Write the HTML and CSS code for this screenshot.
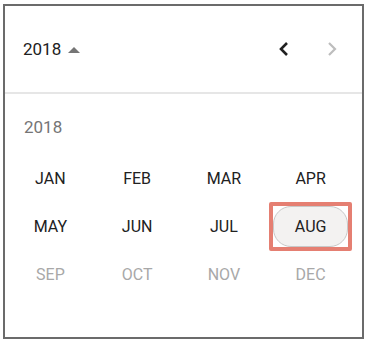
FILE: index.html
```html
<!DOCTYPE html>
<html>
<head>
	<title>Month picker</title>
	<link rel="stylesheet" href="styles.css">
</head>
<body>
	<div class="picker">
		<div class="picker-head">
			<button class="year-toggle">2018 <span class="caret"></span></button>
			<div class="nav">
				<button class="nav-btn">
					<svg width="12" height="16" viewBox="0 0 12 16"><path d="M9 2 L3 8 L9 14" fill="none" stroke="#212121" stroke-width="2.6"/></svg>
				</button>
				<button class="nav-btn disabled">
					<svg width="12" height="16" viewBox="0 0 12 16"><path d="M3 2 L9 8 L3 14" fill="none" stroke="#bdbdbd" stroke-width="2.2"/></svg>
				</button>
			</div>
		</div>

		<div class="year-label">2018</div>

		<div class="months">
			<div class="month">JAN</div>
			<div class="month">FEB</div>
			<div class="month">MAR</div>
			<div class="month">APR</div>
			<div class="month">MAY</div>
			<div class="month">JUN</div>
			<div class="month">JUL</div>
			<div class="month"><span class="focus-ring"><span class="pill">AUG</span></span></div>
			<div class="month off">SEP</div>
			<div class="month off">OCT</div>
			<div class="month off">NOV</div>
			<div class="month off">DEC</div>
		</div>
	</div>
</body>
</html>
```

FILE: styles.css
```css
body {
	margin: 0;
	background: #fff;
	font-family: Roboto, "Liberation Sans", sans-serif;
	color: #212121;
}

.picker {
	margin: 4px 0 0 3px;
	width: 357px;
	height: 331px;
	border: 2px solid #6b6b6b;
	background: #fff;
}

.picker-head {
	height: 86px;
	border-bottom: 2px solid #e6e6e6;
	display: flex;
	align-items: center;
	justify-content: space-between;
	padding: 0 24px 0 18px;
}

.year-toggle {
	border: none;
	background: none;
	padding: 0;
	font-family: inherit;
	font-size: 17px;
	color: #212121;
	display: flex;
	align-items: center;
	gap: 7px;
}

.caret {
	width: 0;
	height: 0;
	border-left: 6px solid transparent;
	border-right: 6px solid transparent;
	border-bottom: 6px solid #757575;
	margin-top: 1px;
}

.nav {
	display: flex;
	gap: 36px;
}

.nav-btn {
	border: none;
	background: none;
	padding: 0;
	width: 12px;
	height: 16px;
	display: flex;
}

.year-label {
	padding: 24px 0 0 19px;
	font-size: 17px;
	line-height: 18px;
	color: #757575;
}

.months {
	margin-top: 18px;
	padding: 0 8px 0 2px;
	display: grid;
	grid-template-columns: repeat(4, 1fr);
	grid-auto-rows: 48px;
}

.month {
	display: flex;
	align-items: center;
	justify-content: center;
	font-size: 16px;
	color: #212121;
}

.month.off {
	color: #a8a8a8;
}

.focus-ring {
	display: flex;
	border: 4px solid #e57f72;
	border-radius: 2px;
	padding: 0;
}

.pill {
	width: 73px;
	height: 39px;
	border: 1px solid #c8c8c8;
	border-radius: 18px;
	background: #f3f2f1;
	display: flex;
	align-items: center;
	justify-content: center;
}
```
